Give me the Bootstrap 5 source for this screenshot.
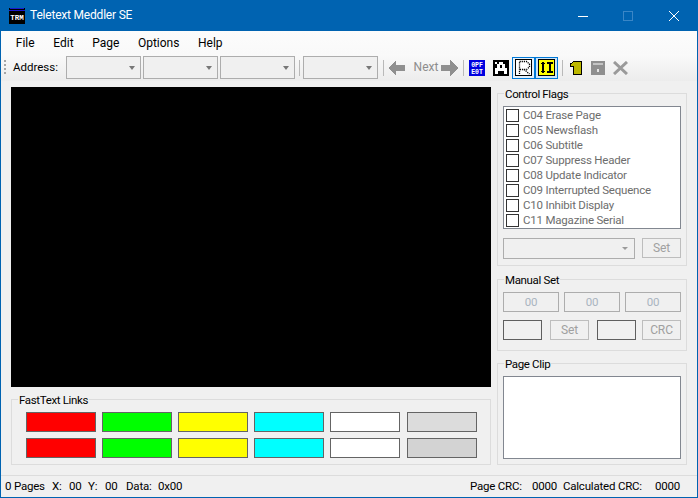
<!DOCTYPE html>
<html lang="en">
<head>
<meta charset="utf-8">
<title>Teletext Meddler SE</title>
<link rel="stylesheet" href="https://cdn.jsdelivr.net/npm/bootstrap@5.3.0/dist/css/bootstrap.min.css">
<style>
html,body{margin:0;height:100%;overflow:hidden;background:#f0f0f0}
body{font-family:Roboto,"Liberation Sans",sans-serif;font-size:11.5px;letter-spacing:-.2px;color:#000;line-height:15px}
.win{height:498px;width:698px;border:1px solid #0063b1;border-top:0;background:#f0f0f0}
.titlebar{height:31px;flex:none;background:#0063b1;color:#fff;margin:0 -1px;padding-left:9px;font-size:12px;letter-spacing:-.2px}
.titletext{margin-left:5px}
.wbtns{margin-left:auto;padding-right:19px}
.wb1{margin-right:35px}.wb2{margin-right:36px}
.menubar{height:23px;flex:none;background:linear-gradient(#fcfcfc,#f9f9f9);padding:2px 0 0 5.5px;font-size:12px;letter-spacing:0}
.menubar span{padding:0 9.3px}
.toolbar{height:27px;flex:none;background:linear-gradient(#fafafa,#ececec);padding-left:3px}
.grip{width:2px;height:16px;background:repeating-linear-gradient(#a5a5a5 0 2px,transparent 2px 4px)}
.addr{margin-left:7px;width:45px;letter-spacing:0}
.combo{width:75px;height:23px;border:1px solid #adadad;background:#f0f0f0;position:relative;padding:0}
.combo::after{content:"";position:absolute;right:5px;top:9px;border:3.5px solid transparent;border-top:4px solid #777;border-bottom:0}
.ml8{margin-left:8px}.ml2{margin-left:2px}.ml3{margin-left:3px}.ml4{margin-left:4px}.ml5{margin-left:5px}.ml7{margin-left:7px}.ml9{margin-left:9px}
.tsep{width:1px;height:16px;background:#b9b9b9}
.nexttxt{width:26px;color:#8d8d8d;text-align:center;font-size:12px;letter-spacing:0}
.tbox{width:23px;height:22px;border:1px solid #0078d7;background:#e5f1fb}
.tbox.dark{background:#cce4f7}
.tbox svg{display:block}
.main{padding:6px 0 0 10px;gap:6px;flex:none}
.lcol{width:480px}
.screen{height:300px;background:#000}
.grp{border:1px solid #dcdcdc;position:relative}
.gtitle{position:absolute;top:-7px;left:6px;background:#f0f0f0;padding:0 1px;line-height:15px;letter-spacing:-.35px}
.fast{height:66px;margin-top:12px;padding:12px 0 0 14px}
.swrow{gap:6px}
.swrow + .swrow{margin-top:6px}
.sw{width:70px;height:20px;border:1px solid #646464}
.sw.gap7{margin-left:1px}
.s-r{background:#f00}.s-g{background:#0f0}.s-y{background:#ff0}.s-c{background:#0ff}.s-w{background:#fff}.s-a{background:#dcdcdc}.s-b{background:#d3d3d3}
.rcol{width:190px;padding-top:6px}
.flags{height:173px;padding:12px 5px 0 5px}
.checks{height:123px;border:1px solid #828790;background:#fff;padding:1px 0 0 2px}
.chk{height:15px;color:#6d6d6d;gap:4px;white-space:nowrap}
.chkbox{width:13px;height:13px;border:1px solid #333;background:#fff;flex:none}
.frow{margin-top:9px}
.cmb2{width:132px;height:21px;border:1px solid #adadad;position:relative}
.cmb2::after{content:"";position:absolute;right:6px;top:8px;border:3px solid transparent;border-top:3px solid #9a9a9a;border-bottom:0}
.btn.dbtn,.btn.dbtn:disabled{width:39px;height:20px;border:1px solid #bdbdbd;background:#f0f0f0;color:#a0a0a0;opacity:1;font-size:12px;line-height:18px;text-align:center;padding:0;border-radius:0;letter-spacing:-.1px}
.manual{height:72px;margin-top:13px;padding:12px 5px 0 5px}
.hexrow{gap:5px}
.hex{width:56px;height:20px;border:1px solid #adadad;color:#a9b4c0;line-height:18px;text-align:center}
.row2{margin-top:8px}
.inp{width:39px;height:20px;border:1px solid #5f5f5f;background:#f0f0f0}
.clip{height:102px;margin-top:12px;padding:12px 5px 0 5px}
.clipbox{height:83px;border:1px solid #828790;background:#fff}
.status{height:22px;flex:none;margin-top:10px;border-top:1px solid #dcdcdc;padding:3px 17px 0 4px;white-space:nowrap}
.st1{width:47px}.st2{width:17px}.st3{width:19px}.st4{width:32px}
.rstat{margin-left:auto}
.st6{width:62px}.st7{width:31px}.st8{width:92px}
</style>
</head>
<body>
<div class="win d-flex flex-column">
  <div class="titlebar d-flex align-items-center">
    <svg width="16" height="16" viewBox="0 0 16 16"><rect width="16" height="16" fill="#000"/><rect x="1" y="0" width="14" height="1" fill="#1a1ad0"/><rect x="0" y="2" width="16" height="1" fill="#1a1ad0"/><text x="8" y="12" font-family="Liberation Mono,monospace" font-size="7.5" font-weight="700" fill="#fff" text-anchor="middle" letter-spacing="0">TRM</text></svg>
    <span class="titletext">Teletext Meddler SE</span>
    <div class="wbtns d-flex align-items-center">
      <svg class="wb1" width="10" height="10" viewBox="0 0 10 10"><path d="M0 5.5H10" stroke="#fff"/></svg>
      <svg class="wb2" width="10" height="10" viewBox="0 0 10 10"><rect x=".5" y=".5" width="9" height="9" fill="none" stroke="#3a86c6"/></svg>
      <svg width="10" height="10" viewBox="0 0 10 10"><path d="M0 0L10 10M10 0L0 10" stroke="#fff"/></svg>
    </div>
  </div>
  <div class="menubar d-flex align-items-center">
    <span>File</span><span>Edit</span><span>Page</span><span>Options</span><span>Help</span>
  </div>
  <div class="toolbar d-flex align-items-center">
    <div class="grip"></div>
    <div class="addr">Address:</div>
    <div class="combo ml8"></div>
    <div class="combo ml2"></div>
    <div class="combo ml2"></div>
    <div class="tsep ml4"></div>
    <div class="combo ml3"></div>
    <div class="tsep ml5"></div>
    <svg class="ml4" width="17" height="16" viewBox="0 0 17 16" shape-rendering="crispEdges"><path d="M8 0L0 8l8 8v-5h9V5H8z" fill="#8f8f8f"/></svg>
    <div class="nexttxt ml8">Next</div>
    <svg class="ml2" width="17" height="16" viewBox="0 0 17 16" shape-rendering="crispEdges"><path d="M9 0l8 8-8 8v-5H0V5h9z" fill="#8f8f8f"/></svg>
    <div class="tsep ml5"></div>
    <svg class="ml5" width="16" height="16" viewBox="0 0 16 16"><rect width="16" height="16" fill="#0000e0"/><text x="8" y="7" font-family="Liberation Mono,monospace" font-size="6.5" font-weight="700" fill="#fff" text-anchor="middle" letter-spacing="0">0PF</text><text x="8" y="14" font-family="Liberation Mono,monospace" font-size="6.5" font-weight="700" fill="#fff" text-anchor="middle" letter-spacing="0">E0T</text></svg>
    <svg class="ml8" width="16" height="16" viewBox="0 0 16 16" shape-rendering="crispEdges"><rect width="16" height="16" fill="#fff"/><path d="M0 0h16v16H0zM1 1v14h14V1z" fill="#000" fill-rule="evenodd"/><path d="M3 2h3v2H3zM2 4h2v3H2zM2 9h2v5H2zM10 2h4v2h-4zM12 4h2v4h-2zM5 5h6v1H5z" fill="#000"/><path d="M1 1h15v15H1z" fill="#000" opacity="0"/><rect x="1" y="1" width="14" height="14" fill="#000"/><path d="M6 2h4v2h2v4h2v6h-3v-3H5v3H2V8h2V4h2z" fill="#fff"/><path d="M7 5h2v3H7z" fill="#000"/><path d="M2 2h2v2H2z" fill="#fff"/></svg>
    <div class="tbox ml3 d-flex align-items-center justify-content-center">
      <svg width="17" height="17" viewBox="0 0 17 17"><rect x=".5" y=".5" width="16" height="16" fill="#fff" stroke="#000"/><path d="M4.5 15V2.5h7l3 2.5v3l-3 2.5h-7M9 10.5l5.5 4.5" fill="none" stroke="#000" stroke-width="1.3" stroke-dasharray="1.2 .9"/></svg>
    </div>
    <div class="tbox dark d-flex align-items-center justify-content-center">
      <svg width="17" height="17" viewBox="0 0 17 17" shape-rendering="crispEdges"><rect x=".5" y=".5" width="16" height="16" fill="#ff0" stroke="#000"/><path d="M5 3v11M3 5l2-2 2 2M3 12l2 2 2-2" fill="none" stroke="#000" stroke-width="1.2"/><path d="M9 3h6v2h-2v7h2v2H9v-2h2V5H9z" fill="#000"/></svg>
    </div>
    <div class="tsep ml4"></div>
    <svg class="ml7" width="12" height="14" viewBox="0 0 12 14" shape-rendering="crispEdges"><path d="M3.5.5h8v13h-8V5H.5V3z" fill="#bdb800" stroke="#000"/></svg>
    <svg class="ml9" width="14" height="14" viewBox="0 0 14 14" shape-rendering="crispEdges"><path d="M0 0h14v14H0z" fill="#8f8f8f"/><path d="M2 2h10v2H2z" fill="#c4c4c4"/><path d="M6 8h2v3H6z" fill="#e4e4e4"/></svg>
    <svg class="ml8" width="15" height="14" viewBox="0 0 15 14"><path d="M1 1l13 12M14 1L1 13" stroke="#9a9a9a" stroke-width="3"/></svg>
  </div>
  <div class="main d-flex">
    <div class="lcol">
      <div class="screen"></div>
      <div class="grp fast">
        <div class="gtitle">FastText Links</div>
        <div class="swrow d-flex">
          <div class="sw s-r"></div><div class="sw s-g"></div><div class="sw s-y"></div><div class="sw s-c"></div><div class="sw s-w"></div><div class="sw s-a gap7"></div>
        </div>
        <div class="swrow d-flex">
          <div class="sw s-r"></div><div class="sw s-g"></div><div class="sw s-y"></div><div class="sw s-c"></div><div class="sw s-w"></div><div class="sw s-b gap7"></div>
        </div>
      </div>
    </div>
    <div class="rcol">
      <div class="grp flags">
        <div class="gtitle">Control Flags</div>
        <div class="checks">
          <div class="chk d-flex align-items-center"><span class="chkbox"></span>C04 Erase Page</div>
          <div class="chk d-flex align-items-center"><span class="chkbox"></span>C05 Newsflash</div>
          <div class="chk d-flex align-items-center"><span class="chkbox"></span>C06 Subtitle</div>
          <div class="chk d-flex align-items-center"><span class="chkbox"></span>C07 Suppress Header</div>
          <div class="chk d-flex align-items-center"><span class="chkbox"></span>C08 Update Indicator</div>
          <div class="chk d-flex align-items-center"><span class="chkbox"></span>C09 Interrupted Sequence</div>
          <div class="chk d-flex align-items-center"><span class="chkbox"></span>C10 Inhibit Display</div>
          <div class="chk d-flex align-items-center"><span class="chkbox"></span>C11 Magazine Serial</div>
        </div>
        <div class="frow d-flex justify-content-between">
          <div class="cmb2"></div>
          <button class="btn dbtn" disabled>Set</button>
        </div>
      </div>
      <div class="grp manual">
        <div class="gtitle">Manual Set</div>
        <div class="hexrow d-flex">
          <div class="hex">00</div><div class="hex">00</div><div class="hex">00</div>
        </div>
        <div class="row2 d-flex justify-content-between">
          <div class="d-flex gap-2"><div class="inp"></div><button class="btn dbtn" disabled>Set</button></div>
          <div class="d-flex ml5 gap-1 flex-grow-1 justify-content-end"><div class="inp"></div><button class="btn dbtn ml2" disabled>CRC</button></div>
        </div>
      </div>
      <div class="grp clip">
        <div class="gtitle">Page Clip</div>
        <div class="clipbox"></div>
      </div>
    </div>
  </div>
  <div class="status d-flex">
    <span class="st1">0 Pages</span><span class="st2">X:</span><span class="st3">00</span><span class="st2">Y:</span><span class="st3">00</span><span class="st4 ml2">Data:</span><span>0x00</span>
    <span class="rstat st6">Page CRC:</span><span class="st7">0000</span><span class="st8">Calculated CRC:</span><span>0000</span>
  </div>
</div>
</body>
</html>
